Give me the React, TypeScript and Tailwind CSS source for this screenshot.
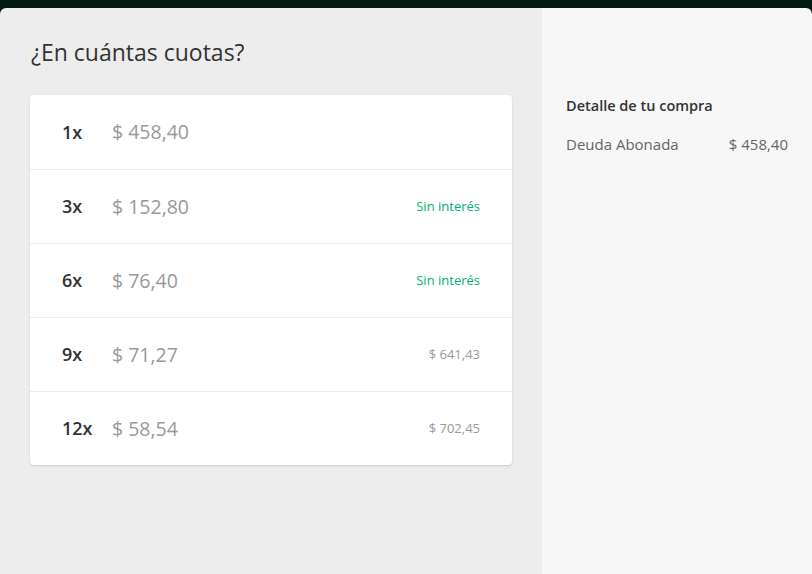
import React from 'react';

const cuotas = [
  { n: '1x', price: '$ 458,40', note: '', green: false },
  { n: '3x', price: '$ 152,80', note: 'Sin interés', green: true },
  { n: '6x', price: '$ 76,40', note: 'Sin interés', green: true },
  { n: '9x', price: '$ 71,27', note: '$ 641,43', green: false },
  { n: '12x', price: '$ 58,54', note: '$ 702,45', green: false },
];

const App = () => {
  return (
    <div className="h-[574px] w-[812px] overflow-hidden bg-[#001a10] pt-[8px]" style={{ fontFamily: '"Open Sans", Lato, sans-serif' }}>
      <div className="flex h-full overflow-hidden rounded-t-[6px]">
        {/* Cuotas */}
        <div className="w-[542px] bg-[#ededed] pl-[30px] pr-[30px] pt-[30px]">
          <h1 className="pl-[1px] text-[23px] leading-[28px] text-[#333]">¿En cuántas cuotas?</h1>
          <div className="mt-[29px] overflow-hidden rounded-[4px] bg-white shadow-[0_1px_2px_rgba(0,0,0,0.15)]">
            {cuotas.map((c, i) => (
              <div
                key={c.n}
                className={`flex h-[74px] items-center pl-[32px] pr-[32px] ${i > 0 ? 'border-t border-[#ebebeb]' : ''}`}
              >
                <span className="w-[50px] text-[18px] font-semibold text-[#333]">{c.n}</span>
                <span className="text-[19.5px] text-[#999]">{c.price}</span>
                <span className={`ml-auto text-[13px] ${c.green ? 'text-[#00b36b]' : 'text-[#999]'}`}>{c.note}</span>
              </div>
            ))}
          </div>
        </div>
        {/* Detalle */}
        <div className="flex-1 bg-[#f7f7f7] pl-[24px] pr-[24px] pt-[88px]">
          <h2 className="text-[14.5px] font-semibold leading-[20px] text-[#333]">Detalle de tu compra</h2>
          <div className="mt-[18px] flex justify-between text-[15px] leading-[20px] text-[#666]">
            <span>Deuda Abonada</span>
            <span>$ 458,40</span>
          </div>
        </div>
      </div>
    </div>
  );
};

export default App;
